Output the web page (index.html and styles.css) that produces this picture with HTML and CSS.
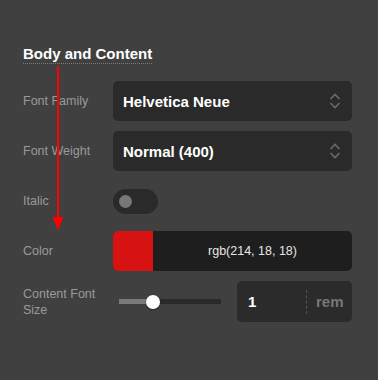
FILE: index.html
```html
<!DOCTYPE html>
<html lang="en">
<head>
    <meta charset="UTF-8">
    <meta name="viewport" content="width=device-width, initial-scale=1.0">
    <title>Body and Content</title>
    <link rel="stylesheet" href="styles.css">
</head>
<body>
    <div class="panel">
        <h2 class="section-title">Body and Content</h2>

        <div class="rows">
            <div class="row">
                <span class="label">Font Family</span>
                <div class="select">
                    <span class="select-value">Helvetica Neue</span>
                    <svg class="chevrons" width="12" height="16" viewBox="0 0 12 16">
                        <path d="M1.5 6 L6 1.5 L10.5 6 M1.5 10 L6 14.5 L10.5 10" fill="none" stroke="#6a6a6a" stroke-width="1.6"/>
                    </svg>
                </div>
            </div>

            <div class="row">
                <span class="label">Font Weight</span>
                <div class="select">
                    <span class="select-value">Normal (400)</span>
                    <svg class="chevrons" width="12" height="16" viewBox="0 0 12 16">
                        <path d="M1.5 6 L6 1.5 L10.5 6 M1.5 10 L6 14.5 L10.5 10" fill="none" stroke="#6a6a6a" stroke-width="1.6"/>
                    </svg>
                </div>
            </div>

            <div class="row">
                <span class="label">Italic</span>
                <div class="toggle"><span class="knob"></span></div>
            </div>

            <div class="row">
                <span class="label">Color</span>
                <div class="color-field">
                    <span class="swatch" style="background: rgb(214, 18, 18);"></span>
                    <span class="color-value">rgb(214, 18, 18)</span>
                </div>
            </div>

            <div class="row">
                <span class="label two-line">Content Font Size</span>
                <div class="size-control">
                    <div class="slider">
                        <div class="track"><div class="fill" style="width: 31px;"></div></div>
                        <span class="thumb" style="left: 34px;"></span>
                    </div>
                    <div class="number-box">
                        <span class="number-value">1</span>
                        <span class="unit">rem</span>
                    </div>
                </div>
            </div>
        </div>

        <!-- annotation arrow -->
        <svg class="arrow" width="14" height="166" viewBox="0 0 14 166">
            <rect x="6" y="0" width="2" height="152" fill="#ff0000"/>
            <polygon points="1.5,151 12.5,151 7,164" fill="#ff0000"/>
        </svg>
    </div>
</body>
</html>
```

FILE: styles.css
```css
body {
    margin: 0;
    background: #404040;
    font-family: "Liberation Sans", Arial, sans-serif;
    min-height: 100vh;
}

.panel {
    position: relative;
    padding: 45px 26px 0 23px;
}

.section-title {
    display: inline-block;
    margin: 0 0 17px 0;
    font-size: 15px;
    line-height: 18px;
    font-weight: bold;
    color: #ffffff;
    border-bottom: 1px dotted #7a7a7a;
}

.rows {
    display: flex;
    flex-direction: column;
    gap: 10px;
}

.row {
    display: grid;
    grid-template-columns: 90px 1fr;
    align-items: center;
    height: 40px;
}

.label {
    font-size: 12.5px;
    color: #9a9a9a;
    line-height: 16px;
}

.two-line {
    padding-right: 10px;
}

.select {
    display: flex;
    align-items: center;
    justify-content: space-between;
    height: 40px;
    padding: 0 11px 0 10px;
    background: #2a2a2a;
    border-radius: 5px;
    box-sizing: border-box;
}

.select-value {
    font-size: 15px;
    font-weight: bold;
    color: #ffffff;
}

.chevrons {
    display: block;
}

.toggle {
    display: flex;
    align-items: center;
    width: 45px;
    height: 25px;
    padding-left: 6px;
    box-sizing: border-box;
    background: #2a2a2a;
    border-radius: 13px;
}

.knob {
    width: 13px;
    height: 13px;
    border-radius: 50%;
    background: #777777;
}

.color-field {
    display: flex;
    height: 40px;
    border-radius: 5px;
    overflow: hidden;
    background: #1e1e1e;
}

.swatch {
    width: 40px;
    flex-shrink: 0;
}

.color-value {
    flex: 1;
    display: flex;
    align-items: center;
    justify-content: center;
    font-size: 12.5px;
    color: #e6e6e6;
}

.size-control {
    display: flex;
    align-items: center;
    gap: 16px;
}

.slider {
    position: relative;
    width: 102px;
    margin-left: 6px;
    height: 14px;
    display: flex;
    align-items: center;
}

.track {
    width: 100%;
    height: 5px;
    background: #2a2a2a;
}

.fill {
    height: 100%;
    background: #7a7a7a;
}

.thumb {
    position: absolute;
    top: 0;
    width: 14px;
    height: 14px;
    margin-left: -7px;
    border-radius: 50%;
    background: #ffffff;
    box-shadow: 0 1px 2px rgba(0, 0, 0, 0.4);
}

.number-box {
    flex: 1;
    display: flex;
    align-items: center;
    height: 41px;
    background: #2b2b2b;
    border-radius: 5px;
}

.number-value {
    width: 70px;
    box-sizing: border-box;
    padding-left: 11px;
    font-size: 15px;
    font-weight: bold;
    color: #ffffff;
    line-height: 24px;
    border-right: 1px dashed #555555;
}

.unit {
    padding-left: 9px;
    font-size: 15px;
    font-weight: bold;
    color: #777777;
}

.arrow {
    position: absolute;
    left: 51px;
    top: 66px;
}
```
